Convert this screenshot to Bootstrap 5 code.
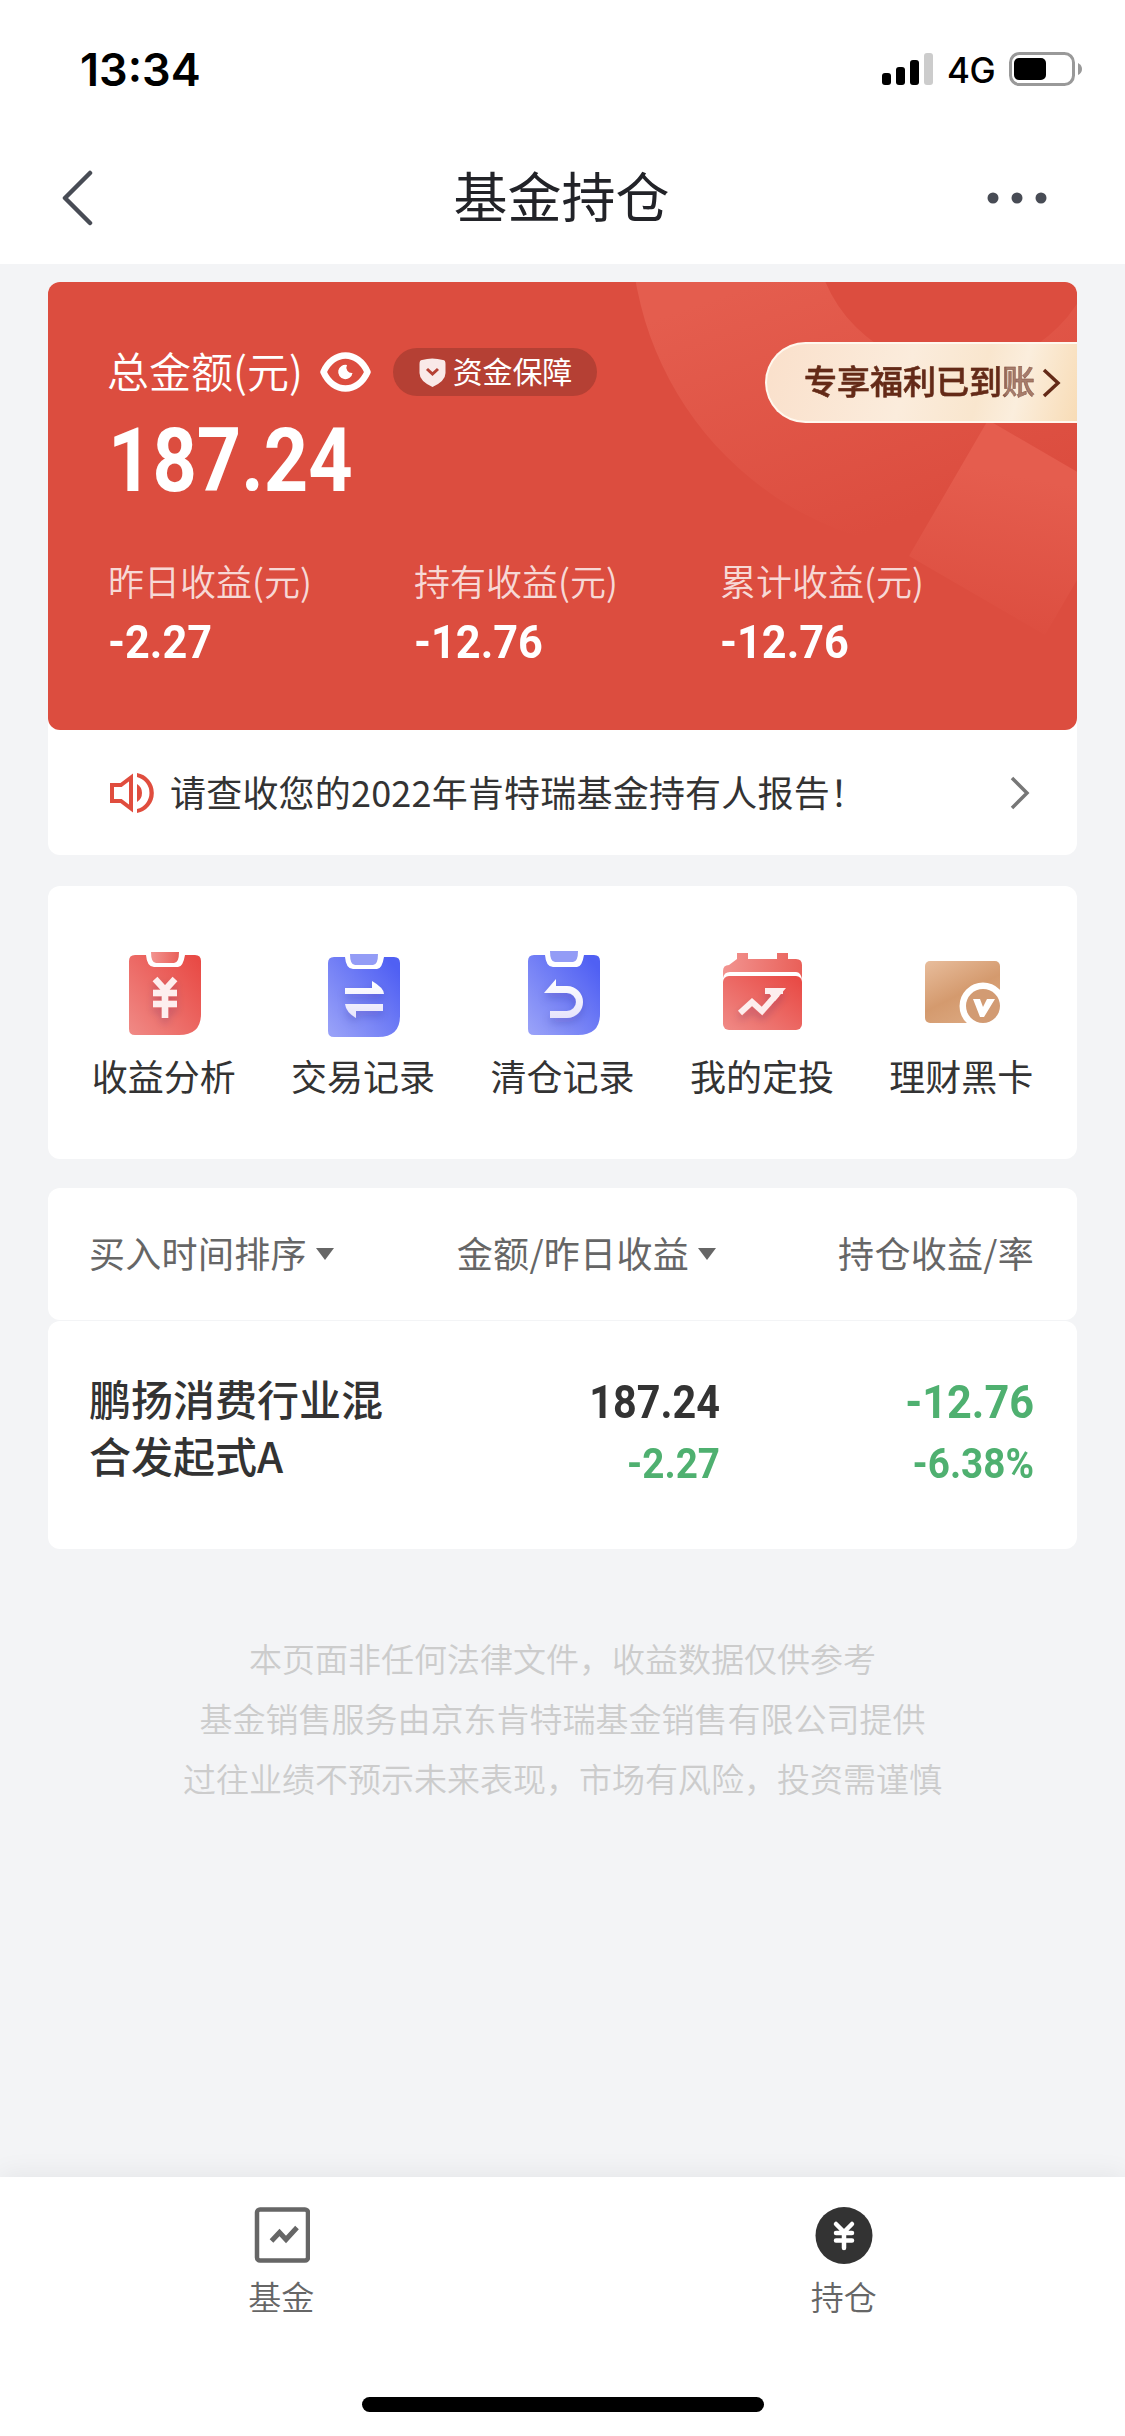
<!DOCTYPE html>
<html lang="zh-CN">
<head>
<meta charset="utf-8">
<meta name="viewport" content="width=device-width, initial-scale=1">
<title>基金持仓</title>
<link href="https://cdn.jsdelivr.net/npm/bootstrap@5.3.0/dist/css/bootstrap.min.css" rel="stylesheet">
<style>
body{font-family:"Noto Sans CJK SC",sans-serif;background:#f3f4f6;color:#333;width:1125px;height:2436px;line-height:1;overflow:hidden}
svg{display:block;flex:none}
.status-bar{height:132px;padding:6px 43px 0 80px;font-family:Inter,"Liberation Sans",sans-serif;color:#000}
.clock{font-size:45px;font-weight:600;letter-spacing:0}
.net{font-size:35px;font-weight:500;letter-spacing:-.6px;margin:2px 14px 0 14px}
.title-bar{height:132px;padding:0 77px 0 60px}
.back-btn{width:77px}
.page-title{font-size:54px;color:#222328;padding-bottom:5px}
.main-area{padding:18px 48px 0}
.hero{height:448px;border-radius:12px;background:#dc4d3f;color:#fff;overflow:hidden;padding:0 0 0 60px}
.hero-art{position:absolute;left:0;top:0}
.hero-top{height:117px;padding-top:63px}
.total-label{font-size:42px;line-height:48px;font-weight:350;padding-bottom:5px;margin-left:-1px}
.guard{height:48px;border-radius:24px;background:#b54034;font-size:30px;padding:0 25px 0 26px;margin-left:22px;gap:7px}
.guard-text{padding-bottom:4px;letter-spacing:-.2px}
.num{font-family:Roboto,"Noto Sans CJK SC",sans-serif;font-weight:700;transform:scaleX(.92);transform-origin:0 50%}
.num-end{transform-origin:100% 50%}
.total-num{font-size:89px;line-height:90px;margin-top:17px;transform:scaleX(.87)}
.stats{padding-top:52px}
.stat{width:306px}
.stat-label{font-size:36px;line-height:44px;color:rgba(255,255,255,.8);font-weight:350}
.stat-num{font-size:47px;line-height:46px;margin-top:17px}
.perk{position:absolute;right:0;top:60px;width:312px;height:81px;border-radius:41px 0 0 41px;border:2px solid #fff8ee;border-right:0;background:linear-gradient(105deg,#fae0cb 0%,#fbecdc 45%,#f9e6ce 68%,#fbeedd 80%,#f8dcb6 100%);color:#642a17;font-size:33px;font-weight:500;padding-left:37px;gap:7px}
.perk-text{background:linear-gradient(90deg,#642a17 84%,#a67d6c 88%);-webkit-background-clip:text;background-clip:text;color:transparent;padding-bottom:4px;-webkit-text-stroke:.5px rgba(100,42,23,.5)}
.notice{height:125px;padding:0 47px 0 61px;font-size:36px}
.notice-text{margin-left:15px;padding-bottom:4px;letter-spacing:.2px}
.panel{background:#fff;border-radius:12px}
.tools{height:273px;margin-top:31px;padding:62px 16px 0}
.tool{width:200px;font-size:36px}
.tool-icon{height:90px;padding-left:2px}
.tool-label{line-height:44px;margin-top:15px}
.sort-row{height:132px;margin-top:29px;padding:0 43px 4px 41px;font-size:36px;color:#666;letter-spacing:.3px}
.fund-row{height:228px;margin-top:1px;padding:48px 43px 0 41px}
.c1{width:312px}.c2{width:319px}.c3{width:314px}
.sort-row .c2{padding-right:4px}
.fund-name{font-size:42px;line-height:57px;font-weight:500;width:300px}
.v1{font-size:47px;line-height:60px;padding-top:3px}
.v1.short{transform:scaleX(.88)}
.v2{font-size:42px;line-height:60px;margin-top:2px}
.loss{color:#4fb070}
.tri{width:0;height:0;border:9px solid transparent;border-top:12px solid #666;border-bottom:0;margin-left:9px;margin-top:3px}
.legal{font-size:33px;line-height:60px;color:#ccc;margin-top:79px;font-weight:350}
.tab-bar{height:259px;box-shadow:0 -4px 24px rgba(0,0,0,.06);color:#666;font-size:33px;padding-top:29px}
.tab-label{margin-top:12px;line-height:40px;font-weight:350}
.home-line{width:402px;height:15px;border-radius:8px;background:#000;margin:0 auto 24px}
</style>
<script src="https://cdn.jsdelivr.net/npm/bootstrap@5.3.0/dist/js/bootstrap.bundle.min.js"></script>
</head>
<body class="d-flex flex-column">
<header class="bg-white">
  <div class="status-bar d-flex align-items-center">
    <span class="clock me-auto">13:34</span>
    <svg width="51" height="32" viewBox="0 0 51 32"><rect y="20" width="9" height="12" rx="3"/><rect x="14" y="14" width="9" height="18" rx="3"/><rect x="28" y="7" width="9" height="25" rx="3"/><rect x="42" width="9" height="32" rx="3" fill="#ccc"/></svg>
    <span class="net">4G</span>
    <svg width="73" height="34" viewBox="0 0 73 34"><rect x="1.5" y="1.5" width="63" height="31" rx="9" fill="none" stroke="#999" stroke-width="3"/><rect x="5" y="6" width="32" height="22" rx="5"/><path d="M69 11q4 2 4 6t-4 6z" fill="#999"/></svg>
  </div>
  <nav class="title-bar d-flex align-items-center justify-content-between">
    <a class="back-btn"><svg width="33" height="56" viewBox="0 0 33 56" fill="none" stroke="#484c55" stroke-width="4.5" stroke-linecap="round" stroke-linejoin="round"><path d="M30 3 5 28l25 25"/></svg></a>
    <h1 class="page-title m-0 fw-normal">基金持仓</h1>
    <svg width="62" height="12" viewBox="0 0 62 12" fill="#484c55"><circle cx="7" cy="6" r="5.5"/><circle cx="31" cy="6" r="5.5"/><circle cx="55" cy="6" r="5.5"/></svg>
  </nav>
</header>
<main class="main-area flex-grow-1">
  <div class="panel">
  <section class="hero position-relative">
    <svg class="hero-art" width="1029" height="448" viewBox="48 282 1029 448">
      <defs>
        <linearGradient id="ring" gradientUnits="userSpaceOnUse" x1="760" y1="282" x2="850" y2="540"><stop offset="0" stop-color="#e45d4e"/><stop offset="1" stop-color="#dc4d3f"/></linearGradient>
        <linearGradient id="sq" gradientUnits="userSpaceOnUse" x1="1040" y1="480" x2="1010" y2="640"><stop offset="0" stop-color="#e55d4e"/><stop offset="1" stop-color="#dc4d3f"/></linearGradient>
      </defs>
      <path fill="url(#ring)" fill-rule="evenodd" d="M631 226a326 326 0 1 0 652 0a326 326 0 1 0-652 0zM814 226a143 143 0 1 0 286 0a143 143 0 1 0-286 0z"/>
      <path fill="url(#sq)" d="M988 420 909 556l136 79 79-136z"/>
    </svg>
    <div class="position-relative">
      <div class="hero-top d-flex align-items-center">
        <span class="total-label">总金额(元)</span>
        <svg class="ms-3" width="52" height="40" viewBox="0 0 52 40"><path d="M4.500 20C14-2 39-2 48.500 20 39 42 14 42 4.500 20z" fill="none" stroke="#fff" stroke-width="6.500" stroke-linejoin="round"/><path d="M28 13a7.200 7.200 0 1 0 5.500 8 5.500 5.500 0 0 1-5.500-8z" fill="#fff"/></svg>
        <span class="guard d-flex align-items-center"><svg width="27" height="30" viewBox="0 0 27 30"><path d="M3 3Q13 0 24 3q2.500 0 2.500 4v9q0 8-13 14Q.5 24 .5 16V7q0-4 2.500-4z" fill="#f9e9e8"/><path d="m8 12 5.500 5 5.500-5" fill="none" stroke="#b54034" stroke-width="3"/></svg><span class="guard-text">资金保障</span></span>
      </div>
      <div class="num total-num">187.24</div>
      <div class="stats d-flex">
        <div class="stat"><div class="stat-label">昨日收益(元)</div><div class="num stat-num">-2.27</div></div>
        <div class="stat"><div class="stat-label">持有收益(元)</div><div class="num stat-num">-12.76</div></div>
        <div class="stat"><div class="stat-label">累计收益(元)</div><div class="num stat-num">-12.76</div></div>
      </div>
    </div>
    <a class="perk d-flex align-items-center text-decoration-none"><span class="perk-text">专享福利已到账</span><svg width="19" height="30" viewBox="0 0 19 30" fill="none" stroke="#642a17" stroke-width="3.500"><path d="m2 2 14 13L2 28"/></svg></a>
  </section>
  <section class="notice d-flex align-items-center">
    <svg width="46" height="42" viewBox="0 0 46 42"><path d="M3 13h9L22 5.500v31L12 29H3z" fill="none" stroke="#e04d3e" stroke-width="4"/><path d="M28 1a20.300 20.300 0 0 1 0 40v-4a16.500 16.500 0 0 0 0-32z" fill="#e04d3e"/><path d="M28 12q5 3 5 9t-5 9z" fill="#e04d3e"/></svg>
    <span class="notice-text me-auto">请查收您的2022年肯特瑞基金持有人报告！</span>
    <svg width="20" height="34" viewBox="0 0 20 34" fill="none" stroke="#777" stroke-width="3.500"><path d="m2 2 15 15L2 32"/></svg>
  </section>
  </div>
  <section class="tools panel d-flex text-center">
    <svg width="0" height="0" class="position-absolute"><defs>
      <linearGradient id="red" x1="1" y1=".1" x2="0" y2="1"><stop offset="0" stop-color="#e84a45"/><stop offset="1" stop-color="#f08a86"/></linearGradient>
      <linearGradient id="redl" x1="1" y1="0" x2="0" y2="0"><stop offset="0" stop-color="#e96059"/><stop offset="1" stop-color="#f29490"/></linearGradient>
      <linearGradient id="blue" x1="1" y1=".2" x2=".1" y2="1"><stop offset="0" stop-color="#5060f3"/><stop offset="1" stop-color="#97a0f8"/></linearGradient>
      <linearGradient id="tan" x1="0" y1="0" x2=".6" y2="1"><stop offset="0" stop-color="#e8bd9c"/><stop offset=".6" stop-color="#d49a6e"/><stop offset="1" stop-color="#dba77f"/></linearGradient>
      <linearGradient id="pale" x1="0" y1="0" x2="0" y2="1"><stop offset="0" stop-color="#fff"/><stop offset="1" stop-color="#e6e4fb"/></linearGradient>
      <filter id="drop" x="-40%" y="-40%" width="180%" height="200%"><feDropShadow dx="0" dy="5" stdDeviation="4" flood-color="#200060" flood-opacity=".2"/></filter>
      <path id="board" d="M6 4h11q1 12 8 12h24q5 0 7-12h10q6 0 6 6v53q0 21-22 21H6q-6 0-6-6V10q0-6 6-6z"/>
      <path id="clip" d="M22 1h28q0 11-5 11H27q-5 0-5-11z"/>
    </defs></svg>
    <div class="tool"><div class="tool-icon d-flex justify-content-center"><svg width="72" height="90" viewBox="0 -3 72 90"><use href="#board" fill="url(#red)"/><use href="#clip" fill="url(#redl)"/><path d="m26 28 10 11 10-11M24 42h24M24 53h24M36 39v28" fill="none" stroke="#fdeeee" stroke-width="6.500" filter="url(#drop)"/></svg></div><div class="tool-label">收益分析</div></div>
    <div class="tool"><div class="tool-icon d-flex justify-content-center"><svg width="72" height="90" viewBox="0 -5 72 90"><use href="#board" fill="url(#blue)"/><use href="#clip" fill="#939cf6"/><path d="M17 35h27v-7q12 7 12 13H17zM55 51H17q1 8 11 14v-7h27z" fill="url(#pale)" filter="url(#drop)"/></svg></div><div class="tool-label">交易记录</div></div>
    <div class="tool"><div class="tool-icon d-flex justify-content-center"><svg width="72" height="90" viewBox="0 -3 72 90"><use href="#board" fill="url(#blue)"/><use href="#clip" y="-1" fill="#939cf6"/><path d="M16 42 28 28v7h11a16 16 0 0 1 0 32H22v-7h17a9 9 0 0 0 0-18z" fill="url(#pale)" filter="url(#drop)"/></svg></div><div class="tool-label">清仓记录</div></div>
    <div class="tool"><div class="tool-icon d-flex justify-content-center"><svg width="80" height="90" viewBox="0 -5 80 90"><path d="M14 6V0h11v6h29V0h11v6h8q6 0 6 6v15q-1-8-6-8H7q-6 0-7 6v-7q0-6 6-6z" fill="url(#redl)"/><rect y="23" width="79" height="54" rx="6" fill="url(#red)"/><path d="M17 60 29 49l10 9 15-17M42 38h18" fill="none" stroke="#fdeeee" stroke-width="6" filter="url(#drop)"/><path d="M42 35h21L52 48z" fill="#fdeeee"/></svg></div><div class="tool-label">我的定投</div></div>
    <div class="tool"><div class="tool-icon d-flex justify-content-center"><svg width="76" height="90" viewBox="-1 -13 76 90"><rect width="75" height="62" rx="5" fill="url(#tan)"/><circle cx="58" cy="45" r="23.500" fill="#fff"/><circle cx="58" cy="45" r="17" fill="#d29b73"/><path d="M48 38h7l3 8 4-8h8L59 56h-4z" fill="#fff"/></svg></div><div class="tool-label">理财黑卡</div></div>
  </section>
  <section class="sort-row panel d-flex align-items-center">
    <div class="c1 d-flex align-items-center">买入时间排序<i class="tri"></i></div>
    <div class="c2 d-flex align-items-center justify-content-end">金额/昨日收益<i class="tri"></i></div>
    <div class="c3 text-end">持仓收益/率</div>
  </section>
  <section class="fund-row panel d-flex">
    <div class="c1"><div class="fund-name">鹏扬消费行业混合发起式A</div></div>
    <div class="c2 text-end"><div class="num num-end v1 short">187.24</div><div class="num num-end v2 loss">-2.27</div></div>
    <div class="c3 text-end loss"><div class="num num-end v1">-12.76</div><div class="num num-end v2">-6.38%</div></div>
  </section>
  <p class="legal text-center mb-0">本页面非任何法律文件，收益数据仅供参考<br>基金销售服务由京东肯特瑞基金销售有限公司提供<br>过往业绩不预示未来表现，市场有风险，投资需谨慎</p>
</main>
<footer class="tab-bar bg-white d-flex flex-column">
  <div class="d-flex mb-auto">
    <a class="w-50 d-flex flex-column align-items-center text-reset text-decoration-none"><svg width="58" height="58" viewBox="0 0 58 58" fill="none" stroke="#666" stroke-width="4.500"><rect x="5" y="3.500" width="51" height="51" rx="3"/><path d="m19.500 35 8-8.500 6.500 7 11-12" stroke-width="5"/></svg><span class="tab-label">基金</span></a>
    <a class="w-50 d-flex flex-column align-items-center text-reset text-decoration-none"><svg width="58" height="58" viewBox="0 0 58 58"><circle cx="29" cy="29.500" r="28.500" fill="#333"/><path d="m21 18 8 8 8-8M21 27h16M21 34.500h16M29 26v16" fill="none" stroke="#fff" stroke-width="4.500" stroke-linecap="round"/></svg><span class="tab-label">持仓</span></a>
  </div>
  <div class="home-line"></div>
</footer>
</body>
</html>
